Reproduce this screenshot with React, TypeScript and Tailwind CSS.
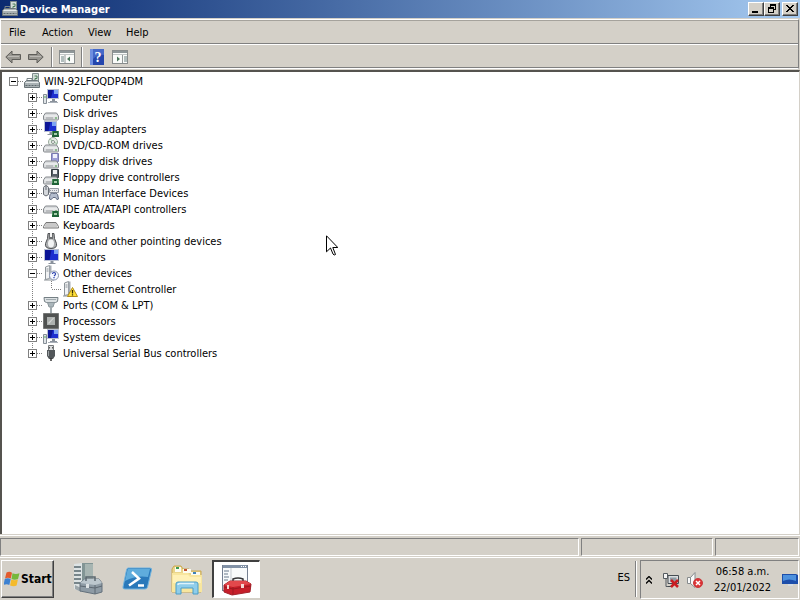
import { useState } from "react";
import type { ReactNode } from "react";

const RAISED =
  "border border-t-white border-l-white border-r-[#404040] border-b-[#404040] shadow-[inset_-1px_-1px_0_#808080]";
const SUNKEN = "border border-t-[#808080] border-l-[#808080] border-r-white border-b-white";
const LABEL = "pt-[2px] pl-1";

function Icon({ children }: { children: ReactNode }) {
  return (
    <svg viewBox="0 0 16 16" className="size-4 shrink-0" aria-hidden="true">
      {children}
    </svg>
  );
}

/* ---------- shared drawing parts ---------- */

function Screen({ x = 4, y = 1, w = 11, h = 9 }) {
  return (
    <g>
      <rect x={x} y={y} width={w} height={h} fill="#b9c0d2" />
      <rect x={x + 1} y={y + 1} width={w - 2} height={h - 2} fill="#1c2fd0" />
      <path d={`M${x + 1} ${y + 1}h${w / 2 - 1}l-2 ${h - 2}h-${w / 2 - 3}z`} fill="#0c1596" />
      <path d={`M${x + w - 5} ${y + 1}h4v4h-4z`} fill="#7ea4f4" />
      <path d={`M${x + w / 2 - 1} ${y + h}h3v2h2v1h-7v-1h2z`} fill="#8a929c" />
    </g>
  );
}

function Drive({ y = 8 }) {
  return (
    <g>
      <path d={`M2.500 ${y}h11l2 3v3q0 1-1 1h-13q-1 0-1-1v-3z`} fill="#d9dbdd" stroke="#85898d" strokeWidth="1" />
      <path d={`M1.500 ${y + 3}h13`} stroke="#f7f8f8" />
      <path d={`M3 ${y + 5}h7`} stroke="#9a9da0" />
      <path d={`M12 ${y + 5}h2`} stroke="#45a042" />
    </g>
  );
}

function Chip() {
  return (
    <g>
      <rect x="9" y="10" width="7" height="6" fill="#1f6338" />
      <path d="M11 12h3v2h-3z" fill="#a8cfac" />
      <path d="M9 11h1M9 13h1M15 11h1M15 13h1" stroke="#7cc285" />
    </g>
  );
}

function Tower() {
  return (
    <g>
      <path d="M2.500 2l4-1.500v13l-4 1z" fill="#f1f2f3" stroke="#8d9499" />
      <path d="M6.500.5h2v13h-2z" fill="#a8afb5" />
      <path d="M3.500 4h2M3.500 6h2" stroke="#8b9298" />
      <path d="M1 15h10" stroke="#898f94" />
    </g>
  );
}

function DeviceManagerIcon() {
  return (
    <Icon>
      <path d="M8.500.5h6v10h-6z" fill="#d3ddd9" stroke="#7f8d8e" />
      <path d="M10.500 3h2.500v2.500h-2v2" fill="none" stroke="#4c7f5a" />
      <path d="M3 7.500v-2h5v2" fill="none" stroke="#778287" />
      <path d="M.5 9.500l2-2h11l2 2v5h-15z" fill="#a9b1b4" stroke="#6b7579" />
      <path d="M1.500 9.500h13" stroke="#e6eaea" />
      <path d="M1.500 12.500h13" stroke="#5d686c" strokeDasharray="2 1" />
    </Icon>
  );
}

function ComputerIcon() {
  return (
    <Icon>
      <path d="M.5 5.500h3v9h-3z" fill="#e0e4e7" stroke="#858e96" />
      <path d="M1 8h2" stroke="#59a75c" />
      <Screen x={4} y={0} w={12} h={10} />
      <path d="M5 13.500h10" stroke="#aab1b9" />
    </Icon>
  );
}

function DiskIcon() {
  return (
    <Icon>
      <Drive />
    </Icon>
  );
}

function DisplayIcon() {
  return (
    <Icon>
      <Screen x={1} y={0} w={13} h={11} />
      <Chip />
    </Icon>
  );
}

function OpticalIcon() {
  return (
    <Icon>
      <circle cx="10" cy="5" r="4.500" fill="#e6efe6" stroke="#9aa99c" />
      <path d="M10 5L7 1.500M10 5l4 1.500" stroke="#8cbc94" />
      <circle cx="10" cy="5" r="1.500" fill="#fff" stroke="#849089" />
      <Drive />
    </Icon>
  );
}

function FloppyDiskIcon() {
  return (
    <Icon>
      <path d="M8.500.5h7v8h-7z" fill="#9d9dd6" stroke="#7a7ab0" />
      <path d="M10 1h4v4h-4z" fill="#f0f1fb" />
      <Drive />
    </Icon>
  );
}

function FloppyControllerIcon() {
  return (
    <Icon>
      <path d="M8.500.5h7v8h-7z" fill="#555e67" stroke="#353d42" />
      <path d="M10 1h4v4h-4z" fill="#eef0f2" />
      <Drive />
      <Chip />
    </Icon>
  );
}

function HidIcon() {
  return (
    <Icon>
      <path d="M.5 2.500q2.500-4 5 0v7q-2.500 3-5 0z" fill="#d4d7db" stroke="#676c74" />
      <path d="M3 1v4" stroke="#676c74" />
      <path d="M6.500 3.500h9v4h-9z" fill="#e8e9ec" stroke="#959aa3" />
      <path d="M7 5.500h8" stroke="#959aa3" strokeDasharray="1 1" />
      <path d="M6.500 14q0-6 2.500-6 2 1 4 0 2 0 2.500 6-1.500 2-3-1.500h-2.500q-2 3.500-3.500 1.500z" fill="#b3bccd" stroke="#606a80" />
    </Icon>
  );
}

function IdeIcon() {
  return (
    <Icon>
      <Drive y={5} />
      <Chip />
    </Icon>
  );
}

function KeyboardIcon() {
  return (
    <Icon>
      <path d="M3 5.500h10l2.500 4v1.500h-15v-1.500z" fill="#e5e5e5" stroke="#777" />
      <path d="M3.500 7h9M2.500 9h11" stroke="#777" strokeDasharray="1 1" />
    </Icon>
  );
}

function MouseIcon() {
  return (
    <Icon>
      <path d="M5 .5h6l.5 5 2 5q1 5-5.500 5t-5.500-5l2-5z" fill="#a9abad" stroke="#505356" />
      <path d="M6 1h4v5H6z" fill="#6c6f71" />
      <path d="M8 0v4" stroke="#f3f3f3" strokeWidth="2" />
      <ellipse cx="8" cy="10.500" rx="3" ry="4" fill="#f3f4f4" />
    </Icon>
  );
}

function MonitorIcon() {
  return (
    <Icon>
      <Screen x={1} y={0} w={15} h={12} />
    </Icon>
  );
}

function OtherIcon() {
  return (
    <Icon>
      <Tower />
      <circle cx="11" cy="10.500" r="4.500" fill="#f6f9ff" stroke="#8996ad" />
      <path d="M9.500 9q0-1.500 1.500-1.500t1.500 1.500q0 1-1.500 2M11 12v1.200" fill="none" stroke="#283fac" strokeWidth="1.200" />
    </Icon>
  );
}

function WarningIcon() {
  return (
    <Icon>
      <Tower />
      <path d="M10.500 6.500l5 9h-10z" fill="#ffe13a" stroke="#b18b17" />
      <path d="M10.500 9v3.500M10.500 13.300v1.200" stroke="#342b05" strokeWidth="1.300" />
    </Icon>
  );
}

function PortIcon() {
  return (
    <Icon>
      <path d="M1 .5h14l-.5 4-2 1h-9l-2-1z" fill="#dce1e3" stroke="#747f84" />
      <path d="M3.500 2.500h9" stroke="#66737a" strokeDasharray="1 1" />
      <path d="M4.500 5.500h7l-1.500 4.500H6z" fill="#aab5ba" stroke="#8b969b" />
      <path d="M7 10h2v6H7z" fill="#a2abaf" />
    </Icon>
  );
}

function ProcessorIcon() {
  return (
    <Icon>
      <rect x=".5" y=".5" width="15" height="15" fill="#575958" stroke="#404241" strokeDasharray="1 1" />
      <rect x="1" y="1" width="14" height="14" fill="#505251" />
      <rect x="4" y="4" width="8" height="8" fill="#adb1af" />
      <path d="M5 10l5-5h1l-5 6z" fill="#d5d8d6" />
    </Icon>
  );
}

function UsbIcon() {
  return (
    <Icon>
      <path d="M5.500.5h5v5h-5z" fill="#dadcdd" stroke="#75797b" />
      <path d="M6.500 2v1.500M9.500 2v1.500" stroke="#555" />
      <path d="M4 5h8v6l-2 3H6l-2-3z" fill="#52575a" />
      <path d="M5.500 6v5" stroke="#9da2a5" />
      <path d="M8 13v3" stroke="#333" strokeWidth="1.500" />
    </Icon>
  );
}

/* ---------- tree ---------- */

function Branch({ open, root, last }: { open: boolean; root?: boolean; last?: boolean }) {
  return (
    <svg viewBox="0 0 19 16" className="h-4 w-[19px]" shapeRendering="crispEdges" aria-hidden="true">
      {!root && <path d={last ? "M8.500 0v8" : "M8.500 0v16"} stroke="#808080" strokeDasharray="1 1" />}
      <path d="M13 8.500h6" stroke="#808080" strokeDasharray="1 1" />
      <rect x="4.500" y="4.500" width="8" height="8" fill="#fff" stroke="#808080" />
      <path d={open ? "M6 8.500h5" : "M6 8.500h5M8.500 6v5"} stroke="#000" />
    </svg>
  );
}

const DEVICES: { name: string; icon: ReactNode; child?: string }[] = [
  { name: "Computer", icon: <ComputerIcon /> },
  { name: "Disk drives", icon: <DiskIcon /> },
  { name: "Display adapters", icon: <DisplayIcon /> },
  { name: "DVD/CD-ROM drives", icon: <OpticalIcon /> },
  { name: "Floppy disk drives", icon: <FloppyDiskIcon /> },
  { name: "Floppy drive controllers", icon: <FloppyControllerIcon /> },
  { name: "Human Interface Devices", icon: <HidIcon /> },
  { name: "IDE ATA/ATAPI controllers", icon: <IdeIcon /> },
  { name: "Keyboards", icon: <KeyboardIcon /> },
  { name: "Mice and other pointing devices", icon: <MouseIcon /> },
  { name: "Monitors", icon: <MonitorIcon /> },
  { name: "Other devices", icon: <OtherIcon />, child: "Ethernet Controller" },
  { name: "Ports (COM & LPT)", icon: <PortIcon /> },
  { name: "Processors", icon: <ProcessorIcon /> },
  { name: "System devices", icon: <ComputerIcon /> },
  { name: "Universal Serial Bus controllers", icon: <UsbIcon /> },
];

function DeviceTree() {
  const [rootOpen, setRootOpen] = useState(true);
  const [open, setOpen] = useState<string[]>(["Other devices"]);
  const toggle = (name: string) =>
    setOpen((list) => (list.includes(name) ? list.filter((n) => n !== name) : [...list, name]));

  return (
    <ul className="pt-[1px] pl-[3px] whitespace-nowrap">
      <li>
        <div className="flex h-4 items-center">
          <button aria-label="Toggle WIN-92LFOQDP4DM" onClick={() => setRootOpen(!rootOpen)}>
            <Branch open={rootOpen} root />
          </button>
          <DeviceManagerIcon />
          <span className={LABEL}>WIN-92LFOQDP4DM</span>
        </div>
        {rootOpen && (
          <ul className="pl-[19px]">
            {DEVICES.map(({ name, icon, child }, i) => (
              <li key={name}>
                <div className="flex h-4 items-center">
                  <button aria-label={`Toggle ${name}`} onClick={() => toggle(name)}>
                    <Branch open={open.includes(name)} last={i === DEVICES.length - 1} />
                  </button>
                  {icon}
                  <span className={LABEL}>{name}</span>
                </div>
                {child && open.includes(name) && (
                  <div className="flex h-4 items-center">
                    <svg viewBox="0 0 38 16" className="h-4 w-[38px]" shapeRendering="crispEdges" aria-hidden="true">
                      <path d="M8.500 0v16M27.500 0v8M28 8.500h10" fill="none" stroke="#808080" strokeDasharray="1 1" />
                    </svg>
                    <WarningIcon />
                    <span className={LABEL}>{child}</span>
                  </div>
                )}
              </li>
            ))}
          </ul>
        )}
      </li>
    </ul>
  );
}

/* ---------- window chrome ---------- */

function CaptionButton({ label, d }: { label: string; d: string }) {
  return (
    <button aria-label={label} className={`flex h-[14px] w-4 items-center justify-center bg-[#d4d0c8] ${RAISED}`}>
      <svg viewBox="0 0 12 10" className="h-[10px] w-3" shapeRendering="crispEdges">
        <path d={d} fill="#000" />
      </svg>
    </button>
  );
}

function TitleBar() {
  return (
    <header className="flex h-[18px] items-center bg-linear-to-r from-[#0b2a70] to-[#a6caf0] pr-[2px] pl-[2px]">
      <DeviceManagerIcon />
      <h1 className="grow pt-[1px] pl-[2px] text-[11px] font-bold text-white">Device Manager</h1>
      <CaptionButton label="Minimize" d="M2 7h6v2H2z" />
      <CaptionButton label="Restore" d="M4 0h6v6H8v3H2V3h2zM5 2v1h3v2h1V2zM3 5v3h4V5z" />
      <span className="w-[2px]" />
      <CaptionButton label="Close" d="M2 1h2v1h1v1h2V2h1V1h2v1H9v1H8v1H7v1h1v1h1v1h1v1H8V7H7V6H5v1H4v1H2V7h1V6h1V5h1V4H4V3H3V2H2z" />
    </header>
  );
}

function PaneIcon({ flip }: { flip?: boolean }) {
  return (
    <svg viewBox="0 0 16 14" className="h-[14px] w-4" aria-hidden="true">
      <rect x=".5" y=".5" width="15" height="13" fill="#fafbf9" stroke="#898d8d" />
      <path d="M1 2h14" stroke="#8e9698" strokeWidth="2" />
      <path d="M1 4.500h14" stroke="#c0c5c5" />
      {flip ? (
        <g>
          <path d="M10.500 5v8" stroke="#939999" />
          <path d="M12 7h3M12 9h3M12 11h3" stroke="#6b8181" />
          <path d="M5 6.500v5L8 9z" fill="#4b765a" />
        </g>
      ) : (
        <g>
          <path d="M6 5v8" stroke="#939999" />
          <path d="M2 7h3M2 9h3M2 11h3" stroke="#6b8181" />
          <path d="M11 6.500v5L8 9z" fill="#4b765a" />
        </g>
      )}
    </svg>
  );
}

function Arrow({ back }: { back?: boolean }) {
  return (
    <svg viewBox="0 0 16 14" className="h-[14px] w-4" aria-hidden="true">
      <path
        d={back ? "M.8 7l6.200-6v3.500h8.500v5H7V13z" : "M15.200 7L9 1v3.500H.5v5H9V13z"}
        fill="#989690"
        stroke="#5e5d59"
        strokeLinejoin="round"
      />
      <path d={back ? "M3 6.500h11" : "M2 6.500h11"} stroke="#bcbab5" />
    </svg>
  );
}

function Divider() {
  return <span className="h-5 w-[2px] border-l border-l-[#808080] border-r border-r-white" />;
}

function Toolbar() {
  return (
    <div role="toolbar" className="flex h-6 items-center border-t border-t-white border-b border-b-[#808080] pt-[1px] pl-1">
      <button aria-label="Back"><Arrow back /></button>
      <button aria-label="Forward" className="pl-[7px]"><Arrow /></button>
      <span className="w-[7px]" />
      <Divider />
      <button aria-label="Show console tree" className="px-[6px]"><PaneIcon /></button>
      <Divider />
      <button aria-label="Help topics" className="px-[7px]">
        <svg viewBox="0 0 14 16" className="h-4 w-[14px]" aria-hidden="true">
          <rect width="14" height="16" fill="#2546ad" />
          <path d="M0 0h3v16H0z" fill="#6e8ee0" />
          <path d="M3 0h11v6q-6-1-11 4z" fill="#4569c9" />
          <text x="8" y="13" textAnchor="middle" fill="#fff" fontSize="14" fontWeight="bold" fontFamily="Liberation Serif, serif">?</text>
        </svg>
      </button>
      <button aria-label="Show action pane" className="pl-[1px]"><PaneIcon flip /></button>
    </div>
  );
}

/* ---------- taskbar ---------- */

function StartFlag() {
  return (
    <svg viewBox="0 0 16 16" className="size-4 shrink-0" aria-hidden="true">
      <path d="M2.500 1.500q3-1.500 5.500.2L6.800 7.500Q4 6 1 7.400z" fill="#e35b2d" />
      <path d="M8.500 2.200q3 1.500 7 0l-1.500 5.700q-3.500 1.500-6.500 0z" fill="#76b83b" />
      <path d="M.8 8q3-1.500 5.900.1L5.300 14Q3 12.500-.4 13.800z" fill="#3d81d1" />
      <path d="M7.300 8.500q3 1.500 6.600.1l-1.300 5.900q-3 1.500-6.500-.1z" fill="#f4ba2a" />
    </svg>
  );
}

function ServerManagerIcon() {
  return (
    <svg viewBox="0 0 32 32" className="size-8" aria-hidden="true">
      <path d="M3 1l8-1v29l-8-3z" fill="#dde3e4" />
      <path d="M11 0h11v28H11z" fill="#829595" />
      <path d="M14 1h8v16h-8z" fill="#a7b5b2" />
      <path d="M3 4h7M3 8h7M3 12h7M3 16h7M3 20h7" stroke="#55676c" strokeWidth="1.500" />
      <path d="M4 22l6 3v4l-6-3z" fill="#9da7ab" />
      <path d="M9 20l5-4h14l3 4v9l-7 2-15-3z" fill="#8e9ba5" stroke="#64717c" />
      <path d="M9 20l15 2 7-2-3-4H14z" fill="#bcc7ce" />
      <path d="M15 18v-4h9v4" fill="none" stroke="#5c6870" strokeWidth="1.500" />
      <path d="M9 23l15 2 7-2M24 22v9" fill="none" stroke="#5d6872" />
      <path d="M15 21h3v4h-3z" fill="#dde2e5" />
    </svg>
  );
}

function PowerShellIcon() {
  return (
    <svg viewBox="0 0 32 32" className="size-8" aria-hidden="true">
      <path d="M7 5h22q2 0 1.500 2l-4 17q-.5 2-2.500 2H4q-2.500 0-2-2L5.500 7Q6 5 7 5z" fill="#2a79ba" stroke="#70b3de" />
      <path d="M7 6h22l-2 8Q15 12 4 18L6.500 7z" fill="#5facdc" />
      <path d="M11 9l7 6.500-10 7" fill="none" stroke="#fff" strokeWidth="2.500" />
      <path d="M17 22.500h6" stroke="#fff" strokeWidth="2.500" />
    </svg>
  );
}

function ExplorerIcon() {
  return (
    <svg viewBox="0 0 32 32" className="size-8" aria-hidden="true">
      <path d="M1 6l2-3h7l2 3h6l1 2h11v21H1z" fill="#ead58b" stroke="#caa850" />
      <path d="M4 4h6v5H4zM12 6h8v4h-8zM20 9h9v4h-9z" fill="#fcfcf0" />
      <path d="M5 4h3v2H5z" fill="#3b9a51" />
      <path d="M13 6h3v2h-3z" fill="#c4522e" />
      <path d="M22 9h3v2h-3z" fill="#3e82b9" />
      <path d="M1 10h16l2 2h12v17H1z" fill="#f8e69e" />
      <path d="M2 12h15l2 2h11v6H2z" fill="#fff1b7" />
      <path d="M5 31V21q0-2 2-2h18q2 0 2 2v10h-5v-6H10v6z" fill="#8fcdea" stroke="#4b9dc7" />
      <path d="M7 22q0-1.500 2-1.500h14" fill="none" stroke="#dff3fb" strokeWidth="1.500" />
    </svg>
  );
}

function ToolboxIcon() {
  return (
    <svg viewBox="0 0 32 32" className="size-8" aria-hidden="true">
      <rect x="1.500" y="1.500" width="25" height="25" fill="#f8fafb" stroke="#747f91" />
      <path d="M2 1h24v3H2z" fill="#8191a6" />
      <path d="M20 2.500h1M22 2.500h1M24 2.500h1" stroke="#fff" />
      <path d="M10 4v16" stroke="#c3c9d0" />
      <path d="M3 7h5M3 10h4M3 13h5M3 16h4" stroke="#68788b" />
      <path d="M12 18v-3q5-2 10 0v3" fill="none" stroke="#363638" strokeWidth="1.500" />
      <path d="M3 21l6-4h16l5 3-1 8-18 3-8-3z" fill="#c61e29" stroke="#a3222a" />
      <path d="M3 21l6-4h16l5 3-18 3z" fill="#e2484c" />
      <path d="M3 23l9 2 18-3M12 23v8" fill="none" stroke="#9d1820" />
      <path d="M6 21h2v4H6zM20 20h3v4h-3z" fill="#f5d7d3" />
    </svg>
  );
}

function TrayNetwork() {
  return (
    <Icon>
      <path d="M5 3.500h10.500v8H5z" fill="#dadddf" stroke="#464d52" />
      <path d="M7 5.500h6.500v4H7z" fill="#8f9ba2" />
      <path d="M3 5.500v9h5" fill="none" stroke="#555b60" />
      <path d="M.5 1.500h4v5h-4z" fill="#f4f4f4" stroke="#555b60" />
      <path d="M5 14.500h5" stroke="#454b50" />
      <path d="M8 8l7 7M15 8l-7 7" stroke="#c91d22" strokeWidth="2.500" />
    </Icon>
  );
}

function TraySpeaker() {
  return (
    <Icon>
      <path d="M.5 5.500h3v6h-3zM3.500 5.500l4.500-5v15l-4.500-4z" fill="#fafafa" stroke="#868b8d" />
      <circle cx="11" cy="11" r="4.500" fill="#dd3436" stroke="#c83a3c" />
      <path d="M9 9l4 4M13 9l-4 4" stroke="#fff" strokeWidth="1.500" />
    </Icon>
  );
}

function Taskbar() {
  return (
    <footer className="flex h-[43px] shrink-0 items-start border-t border-t-white pt-[2px] pr-[1px] pl-[1px]">
      <button className={`flex h-[38px] w-[53px] items-center gap-[1px] pl-[2px] text-[12px] font-bold ${RAISED}`}>
        <StartFlag />
        Start
      </button>
      <nav aria-label="Pinned programs" className="flex grow items-center pl-2">
        <button aria-label="Server Manager" className="flex h-[38px] w-[50px] items-center justify-center"><ServerManagerIcon /></button>
        <button aria-label="PowerShell" className="flex h-[38px] w-[50px] items-center justify-center"><PowerShellIcon /></button>
        <button aria-label="Windows Explorer" className="flex h-[38px] w-[50px] items-center justify-center"><ExplorerIcon /></button>
        <button
          aria-label="Device Manager"
          className="flex h-[38px] w-12 items-center justify-center border-t-2 border-l-2 border-r border-b border-t-[#404040] border-l-[#404040] border-r-white border-b-white bg-white"
        >
          <ToolboxIcon />
        </button>
      </nav>
      <button className="flex h-9 items-center pr-[5px]">ES</button>
      <span className="mt-[1px] h-9 w-[2px] border-l border-l-[#808080] border-r border-r-white" />
      <div className={`ml-[3px] flex h-[39px] w-[159px] items-center pl-[5px] ${SUNKEN}`}>
        <button aria-label="Show hidden icons">
          <svg viewBox="0 0 6 8" className="h-2 w-[6px]">
            <path d="M0 3.500l3-3 3 3M0 7.500l3-3 3 3" fill="none" stroke="#000" strokeWidth="1.300" />
          </svg>
        </button>
        <button aria-label="Network" className="pl-[11px]"><TrayNetwork /></button>
        <button aria-label="Volume" className="pl-2"><TraySpeaker /></button>
        <time className="w-20 text-center leading-4" dateTime="2022-01-22T06:58">
          06:58 a.m.
          <br />
          22/01/2022
        </time>
        <button aria-label="Show desktop">
          <svg viewBox="0 0 16 16" className="size-4" aria-hidden="true">
            <path d="M0 2h14l2 1v9H0z" fill="#1d4eaa" />
            <path d="M1 3h13v6Q7 6 1 9z" fill="#4d91de" />
            <path d="M6 12h5v2H6z" fill="#d5dce3" />
          </svg>
        </button>
      </div>
    </footer>
  );
}

export default function App() {
  return (
    <div className="flex h-screen flex-col overflow-hidden bg-[#d4d0c8] font-['DejaVu_Sans_Condensed','DejaVu_Sans',sans-serif] text-[11px] leading-4 text-black">
      <TitleBar />
      <div className="mt-[1px] mr-[1px] border-t border-r border-b border-l border-t-white border-l-white border-r-[#808080] border-b-white">
        <nav aria-label="Menu" className="flex h-6 items-center border-t border-b border-t-[#a5a29c] border-b-[#808080] pt-[1px] pl-2">
          <button className="w-[33px] text-left">File</button>
          <button className="w-[46px] text-left">Action</button>
          <button className="w-[38px] text-left">View</button>
          <button className="text-left">Help</button>
        </nav>
        <Toolbar />
      </div>
      <main className="mt-[1px] min-h-0 grow overflow-hidden border-t-2 border-l-2 border-r border-t-[#55534f] border-l-[#55534f] border-r-[#d4d0c8] bg-white">
        <DeviceTree />
      </main>
      <div role="status" className="mt-[1px] flex h-[22px] shrink-0 gap-[2px] border-t border-t-white pt-[2px] pr-[1px] pb-[1px]">
        <div className={`grow ${SUNKEN}`} />
        <div className={`w-[132px] ${SUNKEN}`} />
        <div className={`w-[84px] ${SUNKEN}`} />
      </div>
      <Taskbar />
      <svg viewBox="0 0 12 21" className="pointer-events-none absolute top-[235px] left-[326px] h-[21px] w-3" aria-hidden="true">
        <path d="M.5.8v16l4-3.800 2.500 6q1 1.800 2.500.5l-2.700-7h5z" fill="#fff" stroke="#000" />
      </svg>
    </div>
  );
}
